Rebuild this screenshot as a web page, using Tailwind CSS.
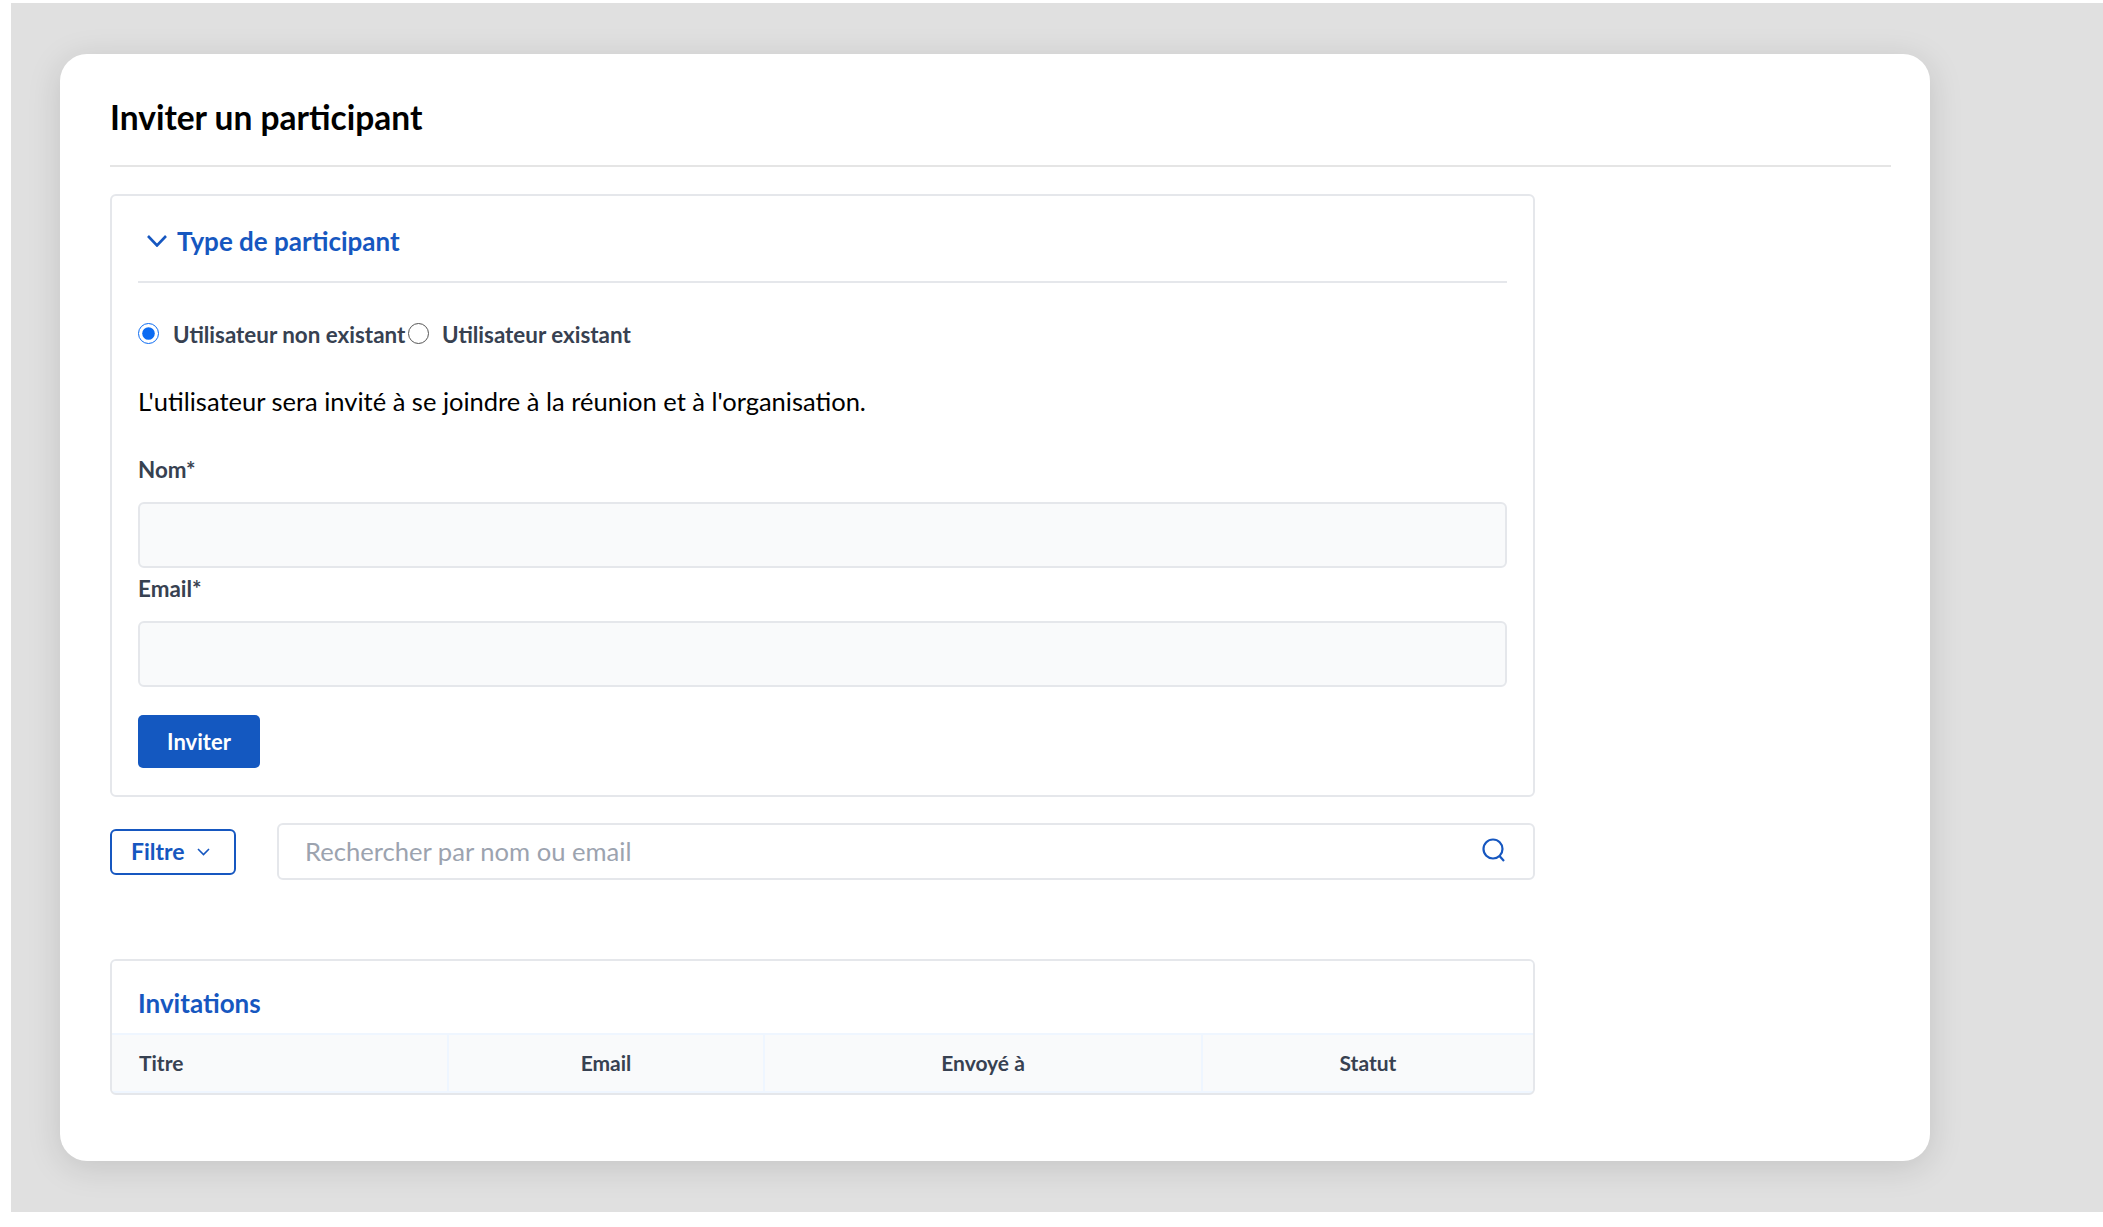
<!DOCTYPE html>
<html lang="fr">
<head>
<meta charset="UTF-8" />
<title>Inviter un participant</title>
<script src="https://cdn.jsdelivr.net/npm/@tailwindcss/browser@4"></script>
</head>
<body class="bg-white font-['Lato','Liberation_Sans',sans-serif]">
<div class="pt-[3px] pl-[11px] h-[1227px] overflow-hidden">
  <div class="bg-[#e0e0e0] h-[1209px] pt-[51px] pl-[49px]">
    <div class="bg-white w-[1870px] h-[1107px] rounded-[27px] shadow-[0_6px_34px_rgba(0,0,0,0.13)] pl-[50px] pr-[39px]">
      <h1 class="h-[113px] border-b-2 border-[#e5e5e5] pt-[42px] text-[33.5px] leading-[42px] font-bold text-black">Inviter un participant</h1>

      <div class="w-[1425px]">
        <section class="mt-[27px] h-[603px] border-2 border-[#e5e7eb] rounded-md px-[26px]">
          <div class="h-[87px] pt-[4px] border-b-2 border-[#e5e7eb] flex items-center pl-[9px] gap-[10px] text-[#1657c0]">
            <svg class="w-[20px] h-[12px]" viewBox="0 0 20 12" fill="none" stroke="currentColor" stroke-width="2.6"><path d="M1 1l9 9.5L19 1" /></svg>
            <h2 class="text-[26px] font-bold leading-none">Type de participant</h2>
          </div>

          <div class="flex items-center mt-[40px] h-[24px] text-[22.4px] font-bold text-[#374151]">
            <input type="radio" name="kind" checked class="w-[21px] h-[21px] m-0 accent-[#0b6bf2] -mt-[4px]" />
            <label class="ml-[14px] mr-[1px] w-[234px]">Utilisateur non existant</label>
            <input type="radio" name="kind" class="w-[21px] h-[21px] m-0 -mt-[4px] appearance-none rounded-full border-[1.5px] border-[#555]" />
            <label class="ml-[13px]">Utilisateur existant</label>
          </div>

          <p class="mt-[39px] text-[25.5px] leading-[30px] text-black">L'utilisateur sera invité à se joindre à la réunion et à l'organisation.</p>

          <label class="block mt-[40px] text-[22.4px] leading-[28px] font-bold text-[#374151]">Nom*</label>
          <input type="text" class="block mt-[18px] w-full h-[66px] bg-[#f9fafb] border-2 border-[#e5e7eb] rounded-md" />
          <label class="block mt-[7px] text-[22.4px] leading-[28px] font-bold text-[#374151]">Email*</label>
          <input type="text" class="block mt-[18px] w-full h-[66px] bg-[#f9fafb] border-2 border-[#e5e7eb] rounded-md" />

          <button class="block mt-[28px] w-[122px] h-[53px] bg-[#1458c0] rounded-[5px] text-white text-[22px] font-bold">Inviter</button>
        </section>

        <div class="mt-[26px] flex items-center gap-[41px]">
          <button class="w-[126px] h-[46px] border-2 border-[#1657c0] rounded-md flex items-center pl-[19px] gap-[12px] text-[#1657c0] text-[23px] font-bold">
            Filtre
            <svg class="w-[13px] h-[8px]" viewBox="0 0 13 8" fill="none" stroke="currentColor" stroke-width="1.6"><path d="M1 1l5.5 5.5L12 1" /></svg>
          </button>
          <div class="flex-1 h-[57px] border-2 border-[#e5e7eb] rounded-md flex items-center pl-[26px] pr-[27px]">
            <span class="flex-1 text-[25.6px] text-[#9ca3af]">Rechercher par nom ou email</span>
            <svg class="w-[24px] h-[24px] -mt-[3px]" viewBox="0 0 24 24" fill="none" stroke="#1657c0" stroke-width="2.2"><circle cx="11" cy="11" r="9.5" /><path d="M17.5 18l4.5 5" /></svg>
          </div>
        </div>

        <section class="mt-[79px] h-[136px] border-2 border-[#e5e7eb] rounded-md overflow-hidden bg-[#eff6ff]">
          <h2 class="h-[72px] bg-white pl-[26px] pt-[25px] text-[26px] leading-[34px] font-bold text-[#1657c0]">Invitations</h2>
          <table class="w-full table-fixed border-collapse text-[21px] font-bold text-[#374151]">
            <tr class="h-[57px] bg-[#f9fafb] border-t-2 border-[#eff6ff]">
              <th class="w-[336px] pl-[27px] text-left font-bold border-r-2 border-[#eff6ff]">Titre</th>
              <th class="w-[316px] font-bold border-r-2 border-[#eff6ff]">Email</th>
              <th class="w-[438px] font-bold border-r-2 border-[#eff6ff]">Envoyé à</th>
              <th class="font-bold">Statut</th>
            </tr>
          </table>
        </section>
      </div>
    </div>
  </div>
</div>
</body>
</html>
